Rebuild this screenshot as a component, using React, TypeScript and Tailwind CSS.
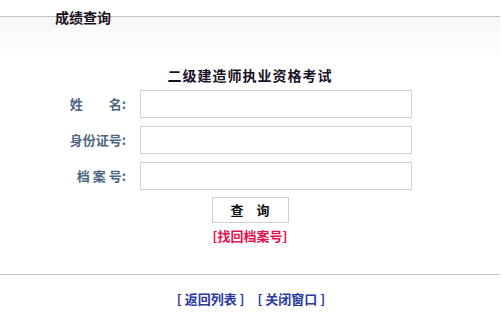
export default function App() {
  const font = { fontFamily: '"SimSun", "Noto Sans CJK SC", sans-serif' };
  const rows = ["姓　　名:", "身份证号:", "档 案 号:"];
  return (
    <div className="w-[502px] h-[312px] bg-white overflow-hidden" style={font}>
      <div className="relative h-[17px] border-b border-[#c4c4c4] mr-[2px]">
        <span className="absolute left-[55px] top-[9px] text-[14px] leading-[16px] font-bold text-[#1a1020]">
          成绩查询
        </span>
      </div>
      <div className="h-[258px] mr-[2px] border-b border-[#c4c4c4] bg-gradient-to-b from-[#f6f6f6] via-white via-[16%] to-white">
        <div className="pt-[49px] text-center text-[14px] leading-[18px] font-bold text-[#1a1028] tracking-[1px]">
          二级建造师执业资格考试
        </div>
        <div className="mt-[6px] flex flex-col gap-[8px]">
          {rows.map((r) => (
            <div key={r} className="flex items-center">
              <div className="w-[140px] pr-[14px] text-right text-[13px] font-bold text-[#4d6783]">
                {r}
              </div>
              <div className="w-[272px] h-[28px] border border-[#cfcfcf] bg-white" />
            </div>
          ))}
        </div>
        <div className="mt-[7px] flex justify-center">
          <div className="w-[77px] h-[26px] border border-[#cfcfcf] bg-white flex items-center justify-center text-[13px] font-bold text-[#111]">
            查　询
          </div>
        </div>
        <div className="mt-[5px] text-center text-[13px] leading-[16px] font-bold text-[#e4124f]">
          [找回档案号]
        </div>
      </div>
      <div className="pt-[14px] flex justify-center gap-[13px] text-[13px] font-bold text-[#2a3aa0]">
        <span>[ 返回列表 ]</span>
        <span>[ 关闭窗口 ]</span>
      </div>
    </div>
  );
}
